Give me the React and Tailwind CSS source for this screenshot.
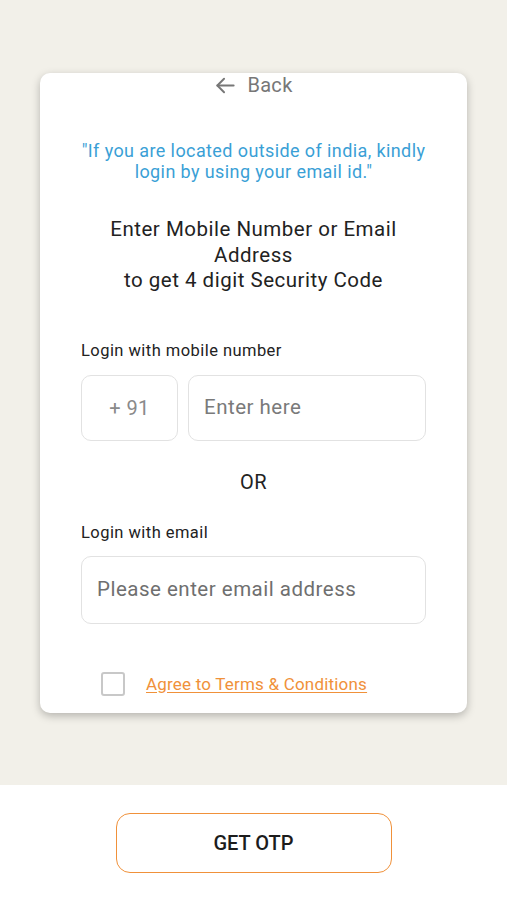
import React from 'react';

export default function App() {
  return (
    <div className="w-[507px] h-[900px] flex flex-col bg-white" style={{ fontFamily: 'Roboto, "Noto Sans", sans-serif' }}>
      {/* Beige area with card */}
      <div className="h-[785px] bg-[#f2f0e9] pt-[73px] px-[40px]">
        <div className="w-[427px] h-[640px] bg-white rounded-[10px] shadow-[0_3px_8px_rgba(0,0,0,0.25)] px-[41px] flex flex-col">
          <div className="flex items-center justify-center gap-[10px] h-[24px] text-[#777777]">
            <svg width="23" height="23" viewBox="0 0 24 24" fill="none" stroke="#777777" strokeWidth="2" strokeLinecap="round" strokeLinejoin="round">
              <path d="M20.5 12H3.5" />
              <path d="M10.5 5l-7 7 7 7" />
            </svg>
            <span className="text-[20px] tracking-[0.3px]">Back</span>
          </div>

          <p className="mt-[43px] text-center text-[18px] leading-[21px] tracking-[0.4px] text-[#3a9fd6]">
            "If you are located outside of india, kindly login by using your email id."
          </p>

          <p className="mt-[35px] text-center text-[20.5px] leading-[25.5px] tracking-[0.5px] text-[#222222]">
            Enter Mobile Number or Email Address
            <br />
            to get 4 digit Security Code
          </p>

          <p className="mt-[47px] text-[16.5px] leading-[20px] tracking-[0.45px] text-[#222222]">Login with mobile number</p>

          <div className="mt-[14px] flex gap-[10px] h-[66px]">
            <div className="w-[97px] border border-[#e2e2e2] rounded-[10px] flex items-center justify-center text-[20px] tracking-[0.4px] text-[#8a8a8a]">
              + 91
            </div>
            <div className="flex-1 border border-[#e2e2e2] rounded-[10px] flex items-center px-[15px] text-[20.5px] tracking-[0.5px] text-[#7a7a7a]">
              Enter here
            </div>
          </div>

          <p className="mt-[29px] text-center text-[20px] leading-[24px] tracking-[0.4px] text-[#222222]">OR</p>

          <p className="mt-[29px] text-[16.5px] leading-[20px] tracking-[0.45px] text-[#222222]">Login with email</p>

          <div className="mt-[13px] h-[68px] border border-[#e2e2e2] rounded-[10px] flex items-center px-[15px] text-[20.5px] tracking-[0.5px] text-[#6f6f6f]">
            Please enter email address
          </div>

          <div className="mt-[48px] flex items-center gap-[21px] pl-[20px]">
            <div className="w-[24px] h-[24px] border-2 border-[#c8c8c8] rounded-[3px]" />
            <span className="text-[17px] tracking-[0.2px] text-[#f0913a] underline underline-offset-2">Agree to Terms &amp; Conditions</span>
          </div>
        </div>
      </div>

      {/* Bottom bar */}
      <div className="flex-1 bg-white flex justify-center pt-[28px]">
        <button className="w-[276px] h-[60px] rounded-[14px] border-[1.5px] border-[#f0913a] bg-white text-[20px] font-medium text-[#1c1c1c]">
          GET OTP
        </button>
      </div>
    </div>
  );
}
